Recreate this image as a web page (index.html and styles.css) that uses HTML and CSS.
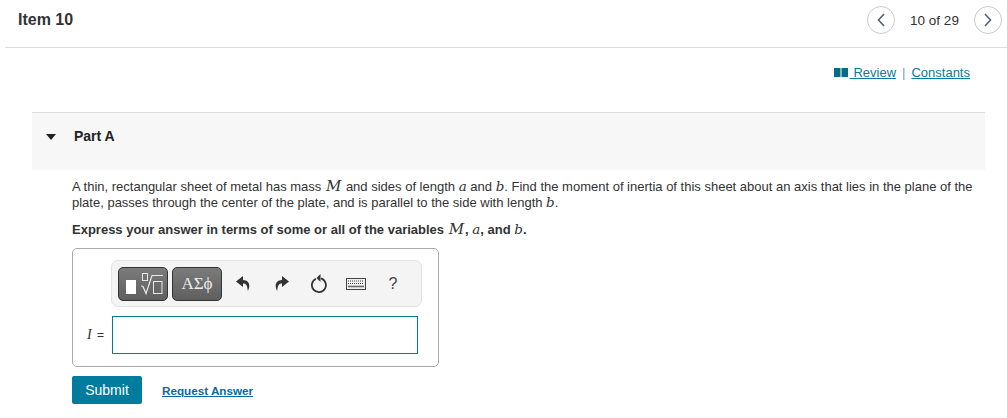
FILE: index.html
```html
<!DOCTYPE html>
<html lang="en">

<head>
    <meta charset="UTF-8" />
    <meta name="viewport" content="width=device-width, initial-scale=1" />
    <title>Item 10</title>
    <link rel="stylesheet" href="styles.css">
</head>

<body>

    <header class="top-bar">
        <h1>Item 10</h1>
        <nav class="pager">
            <a class="pager-btn" href="#" aria-label="Previous">
                <svg width="10" height="14" viewBox="0 0 10 14"><path d="M8 1 2.500 7 8 13" fill="none" stroke="#4d6478" stroke-width="1.600"/></svg>
            </a>
            <span class="pager-text">10 of 29</span>
            <a class="pager-btn" href="#" aria-label="Next">
                <svg width="10" height="14" viewBox="0 0 10 14"><path d="M2 1 7.500 7 2 13" fill="none" stroke="#4d6478" stroke-width="1.600"/></svg>
            </a>
        </nav>
    </header>

    <div class="links">
        <a href="#"><svg class="book" width="14" height="9" viewBox="0 0 14 9"><path d="M0 0h6.500v9H0zM7.500 0H14v9H7.500z" fill="#0b6a85"/></svg> Review</a>
        <span class="sep">|</span>
        <a href="#">Constants</a>
    </div>

    <section class="part">
        <div class="part-head">
            <span class="arrow"></span>
            <h2>Part A</h2>
        </div>

        <div class="part-body">
            <p class="question">A thin, rectangular sheet of metal has mass <i class="var var-big">M</i> and sides of length <i class="var">a</i> and <i class="var">b</i>. Find the moment of inertia of this sheet about an axis that lies in the plane of the plate, passes through the center of the plate, and is parallel to the side with length <i class="var">b</i>.</p>
            <p class="express">Express your answer in terms of some or all of the variables <i class="var var-big">M</i>, <i class="var">a</i>, and <i class="var">b</i>.</p>

            <div class="answer-box">
                <div class="toolbar">
                    <button class="tool-btn" aria-label="Templates">
                        <svg width="44" height="30" viewBox="0 0 44 30">
                            <rect x="5" y="11" width="10" height="14" fill="#fff"/>
                            <rect x="21.500" y="4.500" width="5" height="7" fill="none" stroke="#e8e8e8"/>
                            <path d="M20 17l2 .500 3 7 6-18H42" fill="none" stroke="#e8e8e8" stroke-width="1.200"/>
                            <rect x="32.500" y="12.500" width="8.500" height="12" fill="none" stroke="#e8e8e8"/>
                        </svg>
                    </button>
                    <button class="tool-btn tool-greek">ΑΣϕ</button>
                    <span class="tool-icon icon-undo">
                        <svg width="14" height="15" viewBox="0 0 14 15"><path d="M7 0 0 5.500 7 11V7.500c3 0 4.300 1.500 4.800 7.500 3-6 1.500-10.500-4.800-11z" fill="#333"/></svg>
                    </span>
                    <span class="tool-icon icon-redo">
                        <svg width="14" height="15" viewBox="0 0 14 15"><path d="M7 0l7 5.500L7 11V7.500c-3 0-4.300 1.500-4.800 7.500-3-6-1.500-10.500 4.800-11z" fill="#333"/></svg>
                    </span>
                    <span class="tool-icon icon-reload">
                        <svg width="18" height="19" viewBox="0 0 18 19"><path d="M6 4.700a7 7 0 1 0 5-.300" fill="none" stroke="#333" stroke-width="1.800"/><path d="M10.500 0v8L6.500 4z" fill="#333"/></svg>
                    </span>
                    <span class="tool-icon icon-keys">
                        <svg width="20" height="12" viewBox="0 0 20 12"><rect x=".5" y=".5" width="19" height="11" fill="#f0f0f0" stroke="#444"/><path d="M2 3h16M2 5.500h16" stroke="#444" stroke-dasharray="1 1"/><path d="M2 8.500h16" stroke="#666" stroke-width="1.500"/></svg>
                    </span>
                    <span class="tool-help">?</span>
                </div>
                <div class="answer-row">
                    <label for="answer"><i class="var var-label">I</i> =</label>
                    <input type="text" id="answer" />
                </div>
            </div>

            <div class="actions">
                <button class="submit">Submit</button>
                <a class="request" href="#">Request Answer</a>
            </div>
        </div>
    </section>

</body>

</html>
```

FILE: styles.css
```css
body {
    font-family: "Liberation Sans", Arial, sans-serif;
    font-size: 13px;
    color: #333;
    background: #fff;
    margin: 0;
    padding: 0;
}

.top-bar {
    display: flex;
    justify-content: space-between;
    align-items: center;
    height: 47px;
    margin-left: 5px;
    padding: 0 5px 0 13px;
    border-bottom: 1px solid #ddd;
}

h1 {
    margin: 0 0 8px;
    font-size: 16px;
    color: #333;
}

.pager {
    display: flex;
    align-items: center;
    margin-bottom: 7px;
}

.pager-btn {
    display: flex;
    align-items: center;
    justify-content: center;
    width: 28px;
    height: 28px;
    border: 1px solid #ccc;
    border-radius: 50%;
    box-sizing: border-box;
}

.pager-text {
    width: 79px;
    text-align: center;
    color: #333;
    font-size: 13.500px;
}

.links {
    display: flex;
    justify-content: flex-end;
    align-items: center;
    gap: 6px;
    height: 17px;
    margin-top: 16px;
    padding-right: 37px;
}

.links a {
    color: #0b7a9b;
    font-size: 13px;
}

.sep {
    color: #6a9fc0;
}

.book {
    margin-right: 2px;
}

.part {
    margin: 31px 22px 0 32px;
}

.part-head {
    display: flex;
    align-items: flex-start;
    gap: 18px;
    height: 58px;
    padding: 15px 0 0 14px;
    box-sizing: border-box;
    background: #f7f7f7;
    border-top: 1px solid #ddd;
}

.arrow {
    width: 0;
    height: 0;
    margin-top: 6px;
    border-left: 5px solid transparent;
    border-right: 5px solid transparent;
    border-top: 6px solid #222;
}

h2 {
    margin: 0;
    font-size: 14px;
    color: #222;
}

.part-body {
    padding: 9px 0 0 40px;
}

.question {
    margin: 0;
    line-height: 16px;
}

.express {
    margin: 11px 0 0;
    font-weight: bold;
    line-height: 16px;
}

.var {
    font-family: "DejaVu Serif", "Liberation Serif", serif;
    font-size: 13.500px;
    font-weight: normal;
    line-height: 1;
}

.var-big {
    font-size: 15px;
    margin: 0 1px;
}

.var-label {
    font-size: 14px;
    font-family: "Liberation Serif", serif;
}

.answer-box {
    width: 367px;
    height: 119px;
    margin-top: 10px;
    border: 1px solid #aaa;
    border-radius: 5px;
    box-sizing: border-box;
}

.toolbar {
    display: flex;
    align-items: center;
    width: 311px;
    height: 47px;
    margin: 11px 0 0 38px;
    padding-left: 6px;
    box-sizing: border-box;
    background: #f4f4f4;
    border: 1px solid #e2e2e2;
    border-radius: 7px;
}

.tool-btn {
    display: flex;
    align-items: center;
    justify-content: center;
    width: 50px;
    height: 34px;
    margin-right: 4px;
    padding: 0;
    background: linear-gradient(#7b7b7b, #5f5f5f);
    border: 1px solid #333;
    border-radius: 5px;
}

.tool-greek {
    margin-right: 0;
    color: #eee;
    font-family: "Liberation Serif", serif;
    font-size: 17px;
}

.tool-icon {
    display: flex;
    justify-content: center;
}

.icon-undo {
    width: 41px;
}

.icon-redo {
    width: 38px;
}

.icon-reload {
    width: 36px;
}

.icon-keys {
    width: 38px;
}

.tool-help {
    width: 36px;
    text-align: center;
    font-size: 16px;
    color: #444;
}

.answer-row {
    display: flex;
    align-items: center;
    margin-top: 9px;
}

.answer-row label {
    width: 31px;
    text-align: right;
    font-size: 12px;
    word-spacing: 2px;
}

.answer-row input {
    width: 306px;
    height: 38px;
    margin-left: 8px;
    border: 1px solid #007c9c;
    box-sizing: border-box;
}

.actions {
    display: flex;
    align-items: center;
    gap: 20px;
    margin-top: 9px;
}

.submit {
    width: 70px;
    height: 28px;
    padding: 0;
    background: #007c9f;
    color: #fff;
    font-family: inherit;
    font-size: 14px;
    border: none;
    border-radius: 2px;
}

.request {
    color: #0b6a9b;
    font-size: 11.700px;
    font-weight: bold;
}
```
